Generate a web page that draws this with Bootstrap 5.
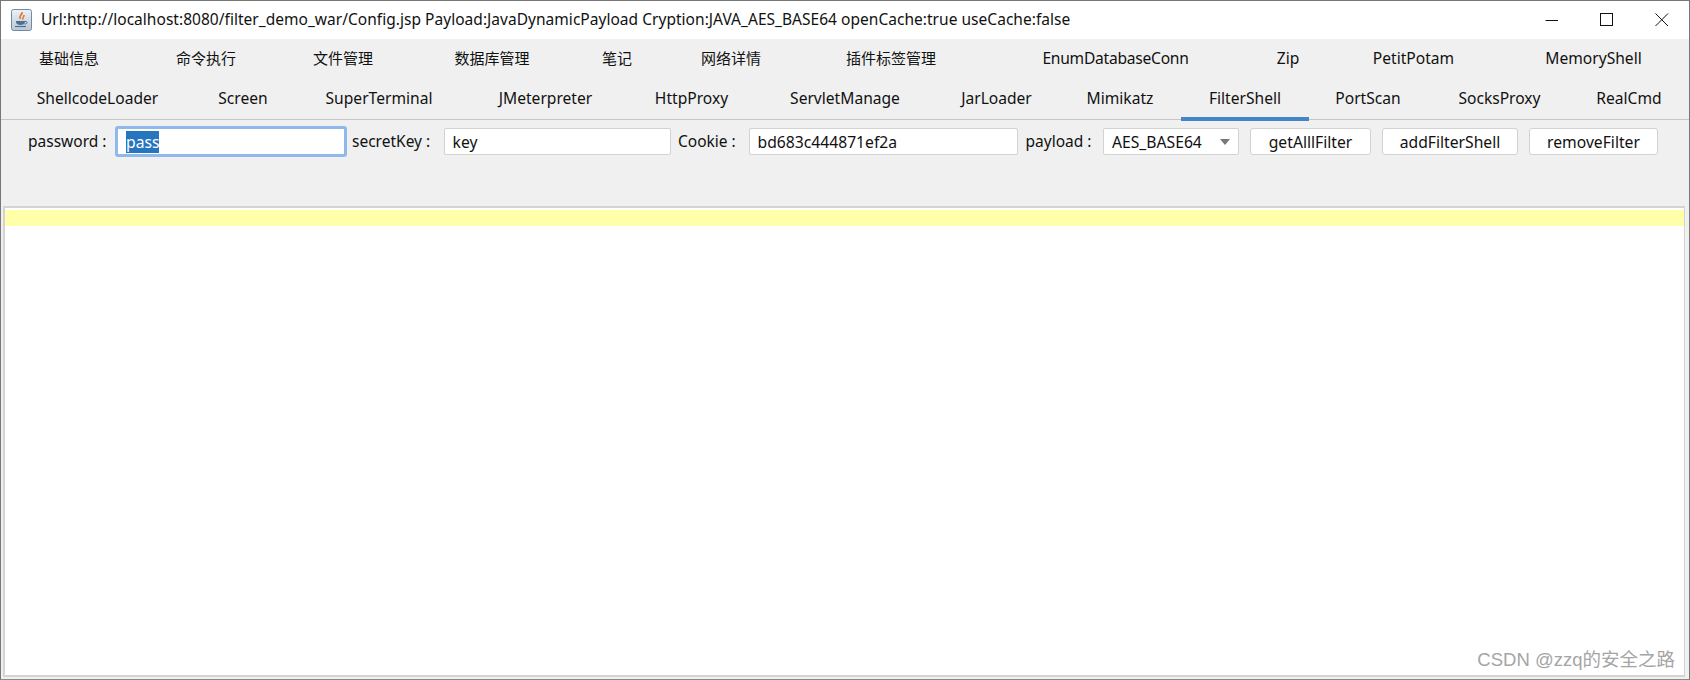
<!DOCTYPE html>
<html lang="zh">
<head>
    <meta charset="UTF-8">
    <title>FilterShell</title>
    <link href="https://cdn.jsdelivr.net/npm/bootstrap@5.3.3/dist/css/bootstrap.min.css" rel="stylesheet">
    <style>
        html, body {
            height: 680px;
            overflow: hidden;
        }

        body {
            background: #f0f0f0;
            color: #111;
            font-family: "Noto Sans", "Noto Sans CJK SC", sans-serif;
            font-size: 15.5px;
        }

        .app-window {
            height: 680px;
            border: 1px solid #777;
            border-bottom-color: #8a8a8a;
        }

        .title-bar {
            height: 38px;
            background: #fff;
            padding-left: 10px;
        }

        .title-text {
            font-size: 15.5px;
            letter-spacing: 0.03px;
            margin-left: 9px;
            white-space: nowrap;
        }

        .win-btn {
            width: 55px;
            display: flex;
            justify-content: center;
        }

        .tab-row {
            display: grid;
            height: 40px;
            padding-left: 2px;
            align-items: center;
            text-align: center;
        }

        .tab-row-a {
            grid-template-columns: 132px 142px 132px 166px 84px 144px 176px 273px 72px 179px 181px;
        }

        .tab-row-b {
            grid-template-columns: 189px 102px 170px 163px 129px 178px 125px 122px 128px 118px 145px 114px;
        }

        .tab-item {
            height: 100%;
            line-height: 38px;
            font-size: 15.6px;
            white-space: nowrap;
        }

        .tab-item.tab-cjk {
            font-size: 15px;
        }

        .tab-item.tab-long {
            letter-spacing: -0.25px;
        }

        .tab-item.is-active {
            border-bottom: 4px solid #4285c9;
        }

        .tabs-box {
            height: 81px;
            border-bottom: 1px solid #c6c6c6;
        }

        .form-strip {
            display: grid;
            grid-template-columns: 87px 232px 96.5px 227.5px 77.5px 269px 85.5px 136px 132px 147px 140px;
            align-items: start;
            height: 86px;
            padding: 8px 0 0 27px;
        }

        .strip-label {
            white-space: nowrap;
            line-height: 27px;
        }

        .strip-input.form-control,
        .strip-select,
        .strip-btn.btn {
            height: 27px;
            padding: 0 8px;
            border: 1.5px solid #d2d2d2;
            border-radius: 2px;
            font-size: 15.7px;
            line-height: 24px;
            color: #111;
            background-color: #fff;
            box-shadow: none;
        }

        .strip-input.is-focus {
            border: 3px solid #8fb9ea;
            border-radius: 3px;
            height: 31px;
            margin-top: -2px;
        }

        .strip-input::selection {
            background: #2675bf;
            color: #fff;
        }

        .strip-select {
            display: flex;
            align-items: center;
            justify-content: space-between;
        }

        .select-caret {
            width: 0;
            height: 0;
            border-left: 5.5px solid transparent;
            border-right: 5.5px solid transparent;
            border-top: 6px solid #777;
        }

        .strip-btn.btn {
            border-radius: 3px;
            padding: 0;
            margin-left: 11px;
            white-space: nowrap;
        }

        .gap-a { padding-left: 5px; }
        .gap-b { padding-left: 7px; }
        .gap-c { padding-left: 8px; }

        .result-panel {
            position: relative;
            flex: 1;
            margin: 0 4px 2px 2px;
            padding-top: 2px;
            background: #fff;
            border: 2px solid #d4d4d4;
            border-right-width: 1px;
        }

        .result-line {
            height: 16px;
            background: #ffffaa;
        }

        .watermark {
            position: absolute;
            right: 9px;
            bottom: 3px;
            color: #a5a5a5;
            font-family: "Liberation Sans", "Noto Sans CJK SC", sans-serif;
            font-size: 18.5px;
            line-height: 24px;
            white-space: nowrap;
        }
    </style>
</head>
<body>

<div class="app-window d-flex flex-column">

    <!-- Title bar -->
    <div class="title-bar d-flex align-items-center">
        <svg width="21" height="22" viewBox="0 0 21 22">
            <defs>
                <linearGradient id="iconBg" x1="0" y1="0" x2="0" y2="1">
                    <stop offset="0" stop-color="#eef2f6"/>
                    <stop offset="1" stop-color="#b9c6d4"/>
                </linearGradient>
            </defs>
            <rect x="0.5" y="0.5" width="20" height="21" rx="2" fill="url(#iconBg)" stroke="#6f8aa6"/>
            <path d="M11 3 C13 5 8 7 9.500 10 C7 8 10 6 11 3 Z M13 6 C14 7.500 11.500 8.500 12 10.500 C10.500 9 12.500 8 13 6 Z" fill="#e0701f" stroke="#e0701f" stroke-width="0.8"/>
            <path d="M5 12 H14 V13 C14 15 12 16 9.500 16 C7 16 5 15 5 13 Z" fill="#4d6f92"/>
            <path d="M14 12.500 C17 12 17 15 13.500 15" fill="none" stroke="#4d6f92" stroke-width="1"/>
            <path d="M4 17.500 H15" stroke="#4d6f92" stroke-width="1.200"/>
        </svg>
        <span class="title-text flex-grow-1">Url:http://localhost:8080/filter_demo_war/Config.jsp Payload:JavaDynamicPayload Cryption:JAVA_AES_BASE64 openCache:true useCache:false</span>
        <div class="d-flex me-0">
            <div class="win-btn"><svg width="14" height="14" viewBox="0 0 14 14"><path d="M0.500 7.500 H13" stroke="#111" fill="none"/></svg></div>
            <div class="win-btn"><svg width="14" height="14" viewBox="0 0 14 14"><rect x="0.500" y="0.500" width="12" height="12" stroke="#111" fill="none"/></svg></div>
            <div class="win-btn"><svg width="14" height="14" viewBox="0 0 14 14"><path d="M0.500 0.500 L13 13 M13 0.500 L0.500 13" stroke="#111" fill="none"/></svg></div>
        </div>
    </div>

    <!-- Tabs -->
    <div class="tabs-box">
        <div class="tab-row tab-row-a">
            <div class="tab-item tab-cjk">基础信息</div>
            <div class="tab-item tab-cjk">命令执行</div>
            <div class="tab-item tab-cjk">文件管理</div>
            <div class="tab-item tab-cjk">数据库管理</div>
            <div class="tab-item tab-cjk">笔记</div>
            <div class="tab-item tab-cjk">网络详情</div>
            <div class="tab-item tab-cjk">插件标签管理</div>
            <div class="tab-item tab-long">EnumDatabaseConn</div>
            <div class="tab-item">Zip</div>
            <div class="tab-item">PetitPotam</div>
            <div class="tab-item">MemoryShell</div>
        </div>
        <div class="tab-row tab-row-b">
            <div class="tab-item">ShellcodeLoader</div>
            <div class="tab-item">Screen</div>
            <div class="tab-item">SuperTerminal</div>
            <div class="tab-item">JMeterpreter</div>
            <div class="tab-item">HttpProxy</div>
            <div class="tab-item">ServletManage</div>
            <div class="tab-item">JarLoader</div>
            <div class="tab-item">Mimikatz</div>
            <div class="tab-item is-active">FilterShell</div>
            <div class="tab-item">PortScan</div>
            <div class="tab-item">SocksProxy</div>
            <div class="tab-item">RealCmd</div>
        </div>
    </div>

    <!-- Form strip -->
    <div class="form-strip">
        <span class="strip-label">password :</span>
        <input id="passField" class="form-control strip-input is-focus" value="pass">
        <span class="strip-label gap-a">secretKey :</span>
        <input class="form-control strip-input" value="key">
        <span class="strip-label gap-b">Cookie :</span>
        <input class="form-control strip-input" value="bd683c444871ef2a">
        <span class="strip-label gap-c">payload :</span>
        <div class="strip-select"><span>AES_BASE64</span><span class="select-caret"></span></div>
        <button class="btn strip-btn">getAlllFilter</button>
        <button class="btn strip-btn">addFilterShell</button>
        <button class="btn strip-btn">removeFilter</button>
    </div>

    <!-- Result -->
    <div class="result-panel">
        <div class="result-line"></div>
        <div class="watermark">CSDN @zzq的安全之路</div>
    </div>
</div>

<script>
    const passField = document.getElementById('passField');
    passField.focus();
    passField.select();
</script>
<script src="https://cdn.jsdelivr.net/npm/bootstrap@5.3.3/dist/js/bootstrap.bundle.min.js"></script>
</body>
</html>
